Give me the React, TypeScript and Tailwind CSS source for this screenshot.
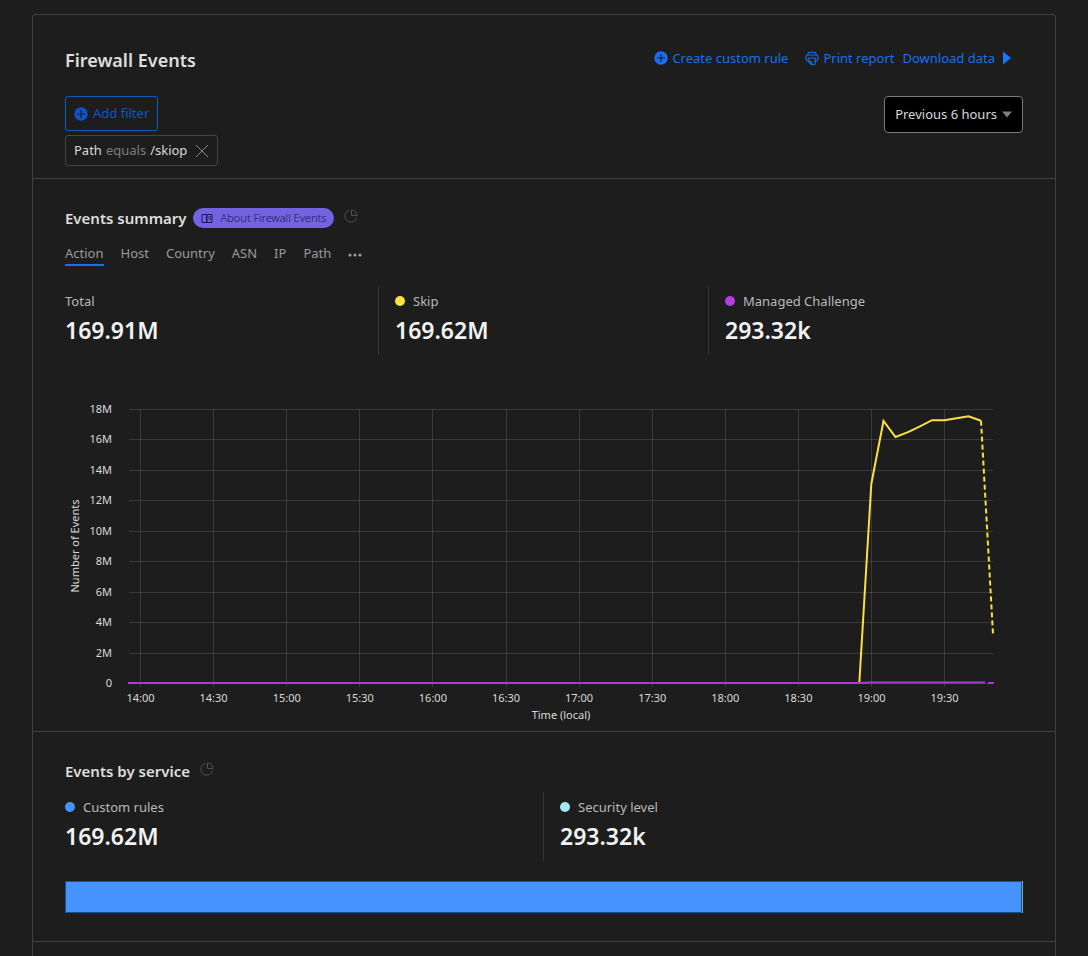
import type { ReactNode } from "react";

type Stat = { label: string; value: string; dot?: string };

const summaryStats: Stat[] = [
  { label: "Total", value: "169.91M" },
  { label: "Skip", value: "169.62M", dot: "bg-[#fbe042]" },
  { label: "Managed Challenge", value: "293.32k", dot: "bg-[#b63be0]" },
];

const serviceStats: Stat[] = [
  { label: "Custom rules", value: "169.62M", dot: "bg-[#4693ff]" },
  { label: "Security level", value: "293.32k", dot: "bg-[#a5e8ee]" },
];

const tabs = ["Action", "Host", "Country", "ASN", "IP", "Path"];

const hours = [
  "14:00", "14:30", "15:00", "15:30", "16:00", "16:30",
  "17:00", "17:30", "18:00", "18:30", "19:00", "19:30",
];

const levels = ["18M", "16M", "14M", "12M", "10M", "8M", "6M", "4M", "2M", "0"];

function PlusCircle({ className }: { className: string }) {
  return (
    <svg viewBox="0 0 14 14" className={className} aria-hidden="true">
      <circle cx="7" cy="7" r="6.7" fill="currentColor" />
      <path d="M7 3v8M3 7h8" stroke="#1d1d1d" strokeWidth="1.1" />
    </svg>
  );
}

function Printer() {
  return (
    <svg
      viewBox="0 0 14 15"
      className="h-[15px] w-3.5"
      fill="none"
      stroke="currentColor"
      strokeWidth="1.1"
      aria-hidden="true"
    >
      <path d="M3 4V2.3Q3 1.2 4.1 1.2h5.8Q11 1.2 11 2.3V4" />
      <path d="M3.8 10.2H3.2Q1 9.8 1 7.8V5.5Q1 4 2.5 4h9Q13 4 13 5.5v2.3q0 2-2.2 2.4h-.6" />
      <path d="M3.8 7h6.4v5.6q0 1.2-1.2 1.2H6.6L3.8 11zM3.8 10.8h2.8v3" />
    </svg>
  );
}

function PieIcon() {
  return (
    <svg
      viewBox="0 0 14 14"
      className="-mt-1 size-3.5"
      fill="none"
      stroke="#505050"
      strokeWidth="1"
      aria-hidden="true"
    >
      <path d="M5.5 1.6A5.8 5.8 0 1 0 12.4 8.5" />
      <path d="M7.5 0.9v5.6h5.6A5.6 5.6 0 0 0 7.5 0.9z" />
    </svg>
  );
}

function Book() {
  return (
    <svg
      viewBox="0 0 12 11"
      className="h-[11px] w-3"
      fill="none"
      stroke="currentColor"
      strokeWidth="1"
      aria-hidden="true"
    >
      <path d="M1 1.5h4.5v8H1zM6.5 1.5H11v8H5.5M6 1v9M7.5 4H10M7.5 6H10" />
    </svg>
  );
}

function StatGrid({ stats, cols }: { stats: Stat[]; cols: string }) {
  return (
    <dl className={`-mx-4 grid ${cols}`}>
      {stats.map((s) => (
        <div
          key={s.label}
          className="h-[69px] border-r border-[#363636] px-4 pt-[3px] last:border-r-0"
        >
          <dt className="flex items-center gap-2 text-[13px] leading-6 text-[#b9b9b9]">
            {s.dot && <span className={`size-2.5 rounded-full ${s.dot}`} />}
            {s.label}
          </dt>
          <dd className="text-[23px] leading-[34px] font-semibold text-[#f2f2f2]">{s.value}</dd>
        </div>
      ))}
    </dl>
  );
}

function EventsChart() {
  const x = (i: number) => 75.5 + i * 73.1;
  const y = (i: number) => Math.round(i * 30.44) + 14.5;
  return (
    <svg
      viewBox="0 0 958 336"
      className="block h-auto w-full"
      role="img"
      aria-label="Number of events over time"
    >
      <g stroke="#ffffff" strokeOpacity="0.13">
        {levels.map((l, i) => (
          <line key={l} x1="64" x2="928" y1={y(i)} y2={y(i)} />
        ))}
        {hours.map((h, i) => (
          <line key={h} x1={Math.floor(x(i)) + 0.5} x2={Math.floor(x(i)) + 0.5} y1="14" y2="292" />
        ))}
      </g>
      <g className="fill-[#d9d9d9] text-[11px]">
        {levels.map((l, i) => (
          <text key={l} x="47" y={y(i) + 3} textAnchor="end">
            {l}
          </text>
        ))}
        {hours.map((h, i) => (
          <text key={h} x={x(i)} y="307" textAnchor="middle">
            {h}
          </text>
        ))}
        <text x="496" y="324" textAnchor="middle">
          Time (local)
        </text>
        <text transform="translate(14 151) rotate(-90)" textAnchor="middle">
          Number of Events
        </text>
      </g>
      <g fill="none" strokeWidth="2">
        <path
          d="M794.3 288 806.3 89 818.5 26 830.5 42 843 37.2 855 31.3 867 25.2 879.5 25.3 891.5 23.2 903.5 21.2 916 25.7"
          stroke="#fbe042"
        />
        <path d="M916 25.7 928 239" stroke="#fbe042" strokeDasharray="5 3" />
        <path d="M63 288H794L806 287.5H920M923 288h6" stroke="#a93bcd" />
      </g>
    </svg>
  );
}

function SectionTitle({ children }: { children: ReactNode }) {
  return <h2 className="text-[15px] leading-6 font-semibold text-[#dedede]">{children}</h2>;
}

export default function App() {
  return (
    <div className="flex min-h-screen flex-col bg-[#1d1d1d] px-8 pt-3.5 font-['Noto_Sans','Open_Sans',sans-serif] text-[13px] text-[#d9d9d9]">
      <main className="flex-1 rounded-t border border-b-0 border-[#404040]">
        <section className="border-b border-[#404040] px-8 pt-8 pb-3">
          <header className="flex items-start justify-between">
            <h1 className="pt-px text-[18px] leading-6 font-semibold text-[#dedede]">
              Firewall Events
            </h1>
            <nav className="flex items-center pr-3 text-[13px] leading-[22px] text-[#1870f0]">
              <a href="#rule" className="flex items-center gap-1">
                <PlusCircle className="size-3.5" />
                Create custom rule
              </a>
              <a href="#print" className="ml-[17px] flex items-center gap-1">
                <Printer />
                Print report
              </a>
              <a href="#download" className="ml-2 flex items-center gap-2">
                Download data
                <svg viewBox="0 0 8 14" className="h-3.5 w-2" aria-hidden="true">
                  <path d="M0 0.5 8 7 0 13.5z" fill="#1477ff" />
                </svg>
              </a>
            </nav>
          </header>
          <div className="mt-6 flex items-start justify-between">
            <div className="flex flex-col items-start gap-1">
              <button
                type="button"
                className="flex h-[35px] items-center gap-[5px] rounded-[3px] border border-[#1259bd] px-2 text-[#0f55c9]"
              >
                <PlusCircle className="size-3.5" />
                Add filter
              </button>
              <div className="flex h-[31px] items-center gap-1 rounded-[3px] border border-[#444] px-2">
                <span>Path</span>
                <span className="text-[#7c7c7c]">equals</span>
                <span>/skiop</span>
                <button type="button" aria-label="Remove filter" className="ml-1">
                  <svg viewBox="0 0 14 14" className="size-3.5" aria-hidden="true">
                    <path d="M1 1l12 12M13 1 1 13" stroke="#8a8a8a" strokeWidth="1" />
                  </svg>
                </button>
              </div>
            </div>
            <button
              type="button"
              aria-haspopup="listbox"
              className="flex h-[37px] items-center gap-[5px] rounded border border-[#7a7a7a] bg-black px-2.5"
            >
              Previous 6 hours
              <svg viewBox="0 0 10 7" className="h-[7px] w-2.5" aria-hidden="true">
                <path d="M0 0.5h10L5 6.5z" fill="#7d7d7d" />
              </svg>
            </button>
          </div>
        </section>

        <section className="border-b border-[#404040] px-8 pt-[27px]">
          <div className="flex items-center">
            <SectionTitle>Events summary</SectionTitle>
            <a
              href="#about"
              className="ml-1.5 flex h-5 items-center gap-2 rounded-full bg-[#7462e0] px-2 text-[11px] font-light text-[#1c1650]"
            >
              <Book />
              About Firewall Events
            </a>
            <span className="ml-2.5">
              <PieIcon />
            </span>
          </div>
          <div
            role="tablist"
            className="mt-[13px] flex h-6 items-start gap-[17px] text-[#9a9a9a]"
          >
            {tabs.map((t, i) => (
              <button
                key={t}
                type="button"
                role="tab"
                aria-selected={i === 0}
                className="border-b-2 border-transparent leading-[21px] aria-selected:border-[#1870f0]"
              >
                {t}
              </button>
            ))}
            <button type="button" aria-label="More" className="self-center">
              <svg viewBox="3 0 16 4" className="h-1 w-4" fill="#9a9a9a" aria-hidden="true">
                <circle cx="5" cy="2" r="1.6" />
                <circle cx="10" cy="2" r="1.6" />
                <circle cx="15" cy="2" r="1.6" />
              </svg>
            </button>
          </div>
          <div className="mt-[19px] pb-10">
            <StatGrid stats={summaryStats} cols="grid-cols-3" />
          </div>
          <EventsChart />
        </section>

        <section className="border-b border-[#404040] px-8 pt-[27px] pb-7">
          <div className="flex items-center gap-2.5">
            <SectionTitle>Events by service</SectionTitle>
            <PieIcon />
          </div>
          <div className="mt-[9px]">
            <StatGrid stats={serviceStats} cols="grid-cols-2" />
          </div>
          <div className="mt-5 flex h-8">
            <div className="flex-1 border border-[#1d4f8c] bg-[#4693ff]" />
            <div className="w-px bg-[#7fb2b6]" />
          </div>
        </section>
      </main>
    </div>
  );
}
